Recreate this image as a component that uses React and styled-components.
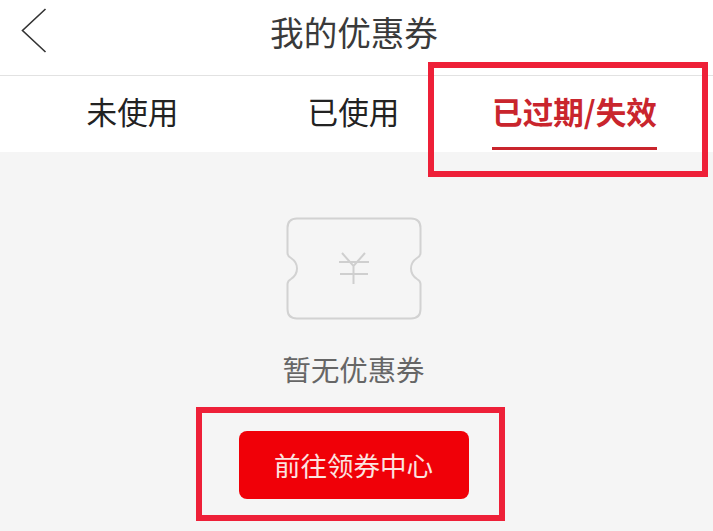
import React, { useState } from 'react';
import styled, { createGlobalStyle } from 'styled-components';

const GlobalStyle = createGlobalStyle`
  html, body {
    margin: 0;
    padding: 0;
    background: #f5f5f5;
    font-family: 'Noto Sans CJK SC', 'Noto Sans', sans-serif;
  }
`;

const Page = styled.div`
  position: relative;
  width: 713px;
  height: 531px;
  overflow: hidden;
  background: #f5f5f5;
`;

const Header = styled.header`
  position: relative;
  display: flex;
  align-items: center;
  justify-content: center;
  height: 75px;
  background: #fff;
  border-bottom: 1px solid #e2e2e2;
`;

const BackButton = styled.button`
  position: absolute;
  left: 21px;
  top: 8px;
  padding: 0;
  border: 0;
  background: none;
  line-height: 0;
`;

const Title = styled.h1`
  margin: -11px 0 0 -5px;
  font-size: 33.6px;
  font-weight: 400;
  line-height: 48px;
  color: #3a3a3a;
`;

const Tabs = styled.nav`
  display: grid;
  grid-template-columns: repeat(3, 221px);
  height: 76px;
  padding-left: 22px;
  background: #fff;
`;

const Tab = styled.div`
  position: relative;
  display: flex;
  justify-content: center;
  padding-top: 13px;
  font-size: 30.6px;
  line-height: 44px;
  white-space: nowrap;
  font-weight: ${({ $active }) => ($active ? 700 : 400)};
  color: ${({ $active }) => ($active ? '#c9252d' : '#222')};
`;

const Underline = styled.span`
  position: absolute;
  left: 28px;
  top: 71px;
  width: 165px;
  height: 3px;
  background: #c9252d;
`;

const Empty = styled.main`
  display: flex;
  flex-direction: column;
  align-items: center;
  padding: 65px 6px 0 0;
`;

const Message = styled.p`
  margin: 28px 0 0;
  font-size: 28.4px;
  line-height: 42px;
  color: #666;
`;

const CenterButton = styled.button`
  width: 230px;
  height: 68px;
  margin-top: 41px;
  padding: 0;
  border: 0;
  border-radius: 8px;
  background: #f00008;
  color: #fbe4e0;
  font-family: inherit;
  font-size: 26.5px;
  line-height: 68px;
  white-space: nowrap;
`;

const Annotation = styled.div`
  position: absolute;
  box-sizing: border-box;
  left: ${({ $left }) => $left}px;
  top: ${({ $top }) => $top}px;
  width: ${({ $width }) => $width}px;
  height: ${({ $height }) => $height}px;
  border: 6px solid #ee2038;
`;

const TicketIcon = () => (
  <svg width="136" height="103" viewBox="0 0 136 103" fill="none" stroke="#d2d2d2" strokeWidth="2">
    <path d="M11 1.5H125Q134.500 1.500 134.500 11V36Q134.500 39 131 41Q125 45 125 51.500Q125 58 131 62Q134.500 64 134.500 67V92Q134.500 101.500 125 101.500H11Q1.500 101.500 1.500 92V67Q1.500 64 5 62Q11 58 11 51.500Q11 45 5 41Q1.500 39 1.500 36V11Q1.500 1.500 11 1.500Z" />
    <path d="M56 36L67.500 49L79 36M53 45H83M54 57H82M67.500 49V67" stroke="#cfcfcf" />
  </svg>
);

const App = () => {
  const [tabs] = useState([
    { label: '未使用' },
    { label: '已使用' },
    { label: '已过期/失效', active: true },
  ]);

  return (
    <Page>
      <GlobalStyle />
      <Header>
        <BackButton aria-label="返回">
          <svg width="26" height="46" viewBox="0 0 26 46" fill="none" stroke="#333" strokeWidth="1.6">
            <path d="M24.500 1L1.500 22.500L24.500 44" />
          </svg>
        </BackButton>
        <Title>我的优惠券</Title>
      </Header>
      <Tabs>
        {tabs.map(({ label, active }) => (
          <Tab key={label} $active={active}>
            {label}
            {active && <Underline />}
          </Tab>
        ))}
      </Tabs>
      <Empty>
        <TicketIcon />
        <Message>暂无优惠券</Message>
        <CenterButton>前往领券中心</CenterButton>
      </Empty>
      <Annotation $left={428} $top={62} $width={280} $height={115} />
      <Annotation $left={196} $top={407} $width={309} $height={114} />
    </Page>
  );
};

export default App;
